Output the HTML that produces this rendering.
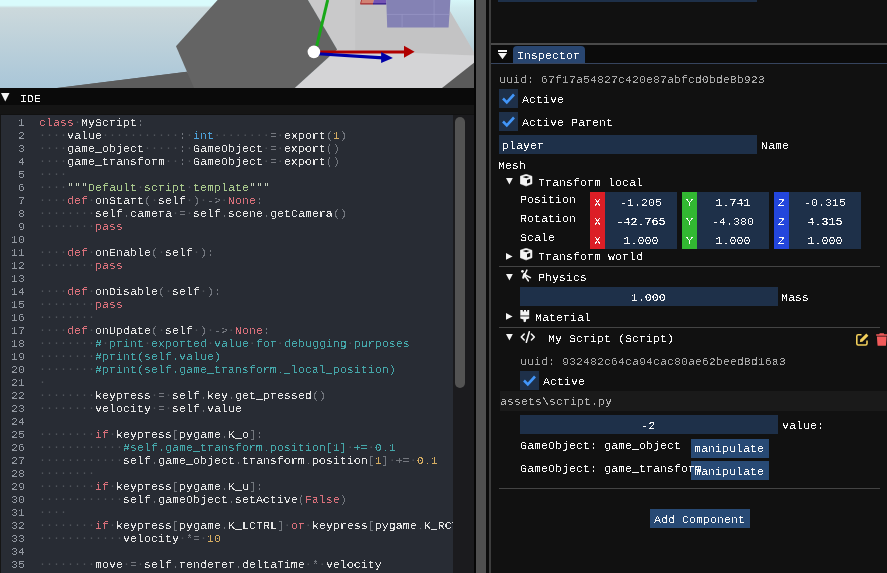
<!DOCTYPE html><html><head><meta charset="utf-8"><style>
*{margin:0;padding:0;box-sizing:border-box}
html,body{width:887px;height:573px;overflow:hidden;background:#111111}
body{position:relative;font-family:"Liberation Mono",monospace;font-size:11.67px;letter-spacing:0px;line-height:13px;color:#fafafa}
.a{position:absolute}
body>div,body>pre,body>svg{will-change:transform}
.t{white-space:pre}
.t,pre{filter:url(#crisp)}
pre.dots{filter:none;color:#50545b}
pre{font-family:"Liberation Mono",monospace;font-size:11.67px;letter-spacing:0px;line-height:13px;margin:0}
pre b{font-weight:normal}
pre i{font-style:normal;color:#50545c}
pre .k{color:#d9707b}
pre .w{color:#e6e6e6}
pre .p{color:#74787f}
pre .n{color:#d7ae63}
pre .s{color:#a9c98d}
pre .q{color:#c9d2bf}
pre .c{color:#45a8aa}
pre .t{color:#4ea4dc}
.fr{background:#1e3049}
.btn{background:#284a75}
.sep{background:#3c3c44;height:1px}
.gray{color:#a6a6a6}
</style></head><body><svg width="0" height="0" style="position:absolute;left:0;top:0"><filter id="crisp" x="-5%" y="-20%" width="110%" height="140%"><feComponentTransfer><feFuncA type="discrete" tableValues="0 1"/></feComponentTransfer></filter></svg>
<svg class="a" style="left:0;top:0" width="474" height="88" viewBox="0 0 474 88">
<defs>
<linearGradient id="sky" x1="0" y1="0" x2="0" y2="1">
<stop offset="0" stop-color="#d9fbfc"/>
<stop offset="0.06" stop-color="#d9fbfc"/>
<stop offset="0.09" stop-color="#ccd9dc"/>
<stop offset="1" stop-color="#a9c6d8"/>
</linearGradient>
</defs>
<rect x="0" y="0" width="474" height="88" fill="url(#sky)"/>
<polygon points="0,88 57,88 187,71.7 194,88" fill="#5a5a5a"/>
<polygon points="57,88 187,71.7 200,88" fill="#5c5c5c"/>
<polygon points="308,0 474,0 474,88 294.7,88 337.1,49.5" fill="#c9c9ca"/>
<polygon points="355.2,0 450,0 450,11 474,52 474,55.5 355.2,50.5" fill="#c3c3c4"/>
<linearGradient id="sky2" x1="0" y1="0" x2="0" y2="1"><stop offset="0" stop-color="#d6f6f8"/><stop offset="0.15" stop-color="#cfeaee"/><stop offset="1" stop-color="#b3cbd4"/></linearGradient>
<polygon points="450,0 474,0 474,52 450,11" fill="url(#sky2)"/>
<polygon points="337.1,50 474,55.5 474,88 294.7,88" fill="#d4d4d6"/>
<polygon points="442,88 474,62.8 474,88" fill="#5a5a5a"/>
<polygon points="217.6,0 308,0 337.1,49.5 294.7,88 194,88 176,46.2" fill="#646464"/>
<polygon points="361.5,0 374,0 373,3.3 360.6,3.3" fill="#d28274"/><polygon points="374,0 386.4,0 386.4,3.3 373,3.3" fill="#7454b4"/><rect x="360.3" y="3.2" width="12.8" height="1.3" fill="#a82828"/><rect x="373" y="3.2" width="13.4" height="1.3" fill="#2a0c88"/><line x1="361.6" y1="0" x2="360.6" y2="3.6" stroke="#b03030" stroke-width="0.9"/>

<polygon points="386.3,0 450.4,0 448.6,27.6 387.2,27.6" fill="#8482b4"/>
<line x1="402.1" y1="14.4" x2="402.1" y2="27.6" stroke="#9c9aca" stroke-width="0.6"/>
<line x1="434.1" y1="0" x2="434.1" y2="27.6" stroke="#9c9aca" stroke-width="0.6"/>
<line x1="387" y1="14.4" x2="449.5" y2="14.4" stroke="#9c9aca" stroke-width="0.6"/>
<line x1="327.7" y1="0" x2="316.7" y2="46" stroke="#18a818" stroke-width="3"/>
<line x1="314" y1="52" x2="405" y2="52" stroke="#b00000" stroke-width="3.2"/>
<polygon points="404,45.7 414.6,51.8 404,57.8" fill="#b00000"/>
<line x1="314" y1="53.5" x2="383" y2="57.8" stroke="#0000a8" stroke-width="3.2"/>
<polygon points="381.1,51.9 392.9,58.1 381.1,62.9" fill="#0000a8"/>
<circle cx="313.9" cy="51.9" r="6.3" fill="#ffffff"/>
</svg>

<div class="a" style="left:0px;top:88px;width:474px;height:17.2px;background:#0a0a0a;"></div>
<div class="a" style="left:0px;top:105.2px;width:474px;height:9.3px;background:#151515;"></div>
<svg class="a" style="left:0.5px;top:93px" width="8.5" height="8.5"><polygon points="0,0 8.5,0 4.25,8.5" fill="#f4f4f4"/></svg>
<div class="a t" style="left:19.5px;top:92.5px">IDE</div>
<div class="a" style="left:1px;top:114.5px;width:452.3px;height:460px;background:#282c34;"></div>
<div class="a" style="left:0px;top:114.5px;width:1px;height:460px;background:#151515;"></div>
<div class="a" style="left:453.3px;top:114.5px;width:20.5px;height:460px;background:#1b1b1e;"></div>
<div class="a" style="left:455px;top:117px;width:10px;height:270.5px;background:#535353;border-radius:5px"></div>
<pre class="a" style="left:11px;top:116.5px;width:14px;text-align:right;color:#959aa3">1
2
3
4
5
6
7
8
9
10
11
12
13
14
15
16
17
18
19
20
21
22
23
24
25
26
27
28
29
30
31
32
33
34
35</pre>
<div class="a" style="left:39px;top:114.5px;width:414.3px;height:460px;overflow:hidden"><pre class="dots" style="position:absolute;left:0;top:1.0px">     ·
····     ··········· ·   ········ ·
····           ····· ·          · ·
····              ·· ·          · ·
····
····          ·      ·
····   ·        ·    · ·  ·
········           · ·
········

····   ·         ·    ·
········

····   ·          ·    ·
········
········
····   ·         ·    · ·  ·
········ ·     ·        ·     ·   ·         ·
········
········
·
········        · ·
········        · ·

········  ·
············                                ·  ·
············                                      ·  ·
········
········  ·
············
····
········  ·                        ·  ·
············        ·  ·

········    · ·                       · ·</pre><pre style="position:absolute;left:0;top:2.0px"><b class="k">class</b> <b class="w">MyScript</b><b class="p">:</b>
    <b class="w">value</b>           <b class="p">:</b> <b class="t">int</b>        <b class="p">=</b> <b class="w">export</b><b class="p">(</b><b class="n">1</b><b class="p">)</b>
    <b class="w">game_object</b>     <b class="p">:</b> <b class="w">GameObject</b> <b class="p">=</b> <b class="w">export</b><b class="p">(</b><b class="p">)</b>
    <b class="w">game_transform</b>  <b class="p">:</b> <b class="w">GameObject</b> <b class="p">=</b> <b class="w">export</b><b class="p">(</b><b class="p">)</b>
    
    <b class="q">"""</b><b class="s">Default</b> <b class="s">script</b> <b class="s">template</b><b class="q">"""</b>
    <b class="k">def</b> <b class="w">onStart</b><b class="p">(</b> <b class="w">self</b> <b class="p">)</b> <b class="p">-</b><b class="p">&gt;</b> <b class="k">None</b><b class="p">:</b>
        <b class="w">self</b><b class="p">.</b><b class="w">camera</b> <b class="p">=</b> <b class="w">self</b><b class="p">.</b><b class="w">scene</b><b class="p">.</b><b class="w">getCamera</b><b class="p">(</b><b class="p">)</b>
        <b class="k">pass</b>

    <b class="k">def</b> <b class="w">onEnable</b><b class="p">(</b> <b class="w">self</b> <b class="p">)</b><b class="p">:</b>
        <b class="k">pass</b>

    <b class="k">def</b> <b class="w">onDisable</b><b class="p">(</b> <b class="w">self</b> <b class="p">)</b><b class="p">:</b>
        <b class="k">pass</b>
        
    <b class="k">def</b> <b class="w">onUpdate</b><b class="p">(</b> <b class="w">self</b> <b class="p">)</b> <b class="p">-</b><b class="p">&gt;</b> <b class="k">None</b><b class="p">:</b>
        <b class="c">#</b> <b class="c">print</b> <b class="c">exported</b> <b class="c">value</b> <b class="c">for</b> <b class="c">debugging</b> <b class="c">purposes</b>
        <b class="c">#print(self.value)</b>
        <b class="c">#print(self.game_transform._local_position)</b>
 
        <b class="w">keypress</b> <b class="p">=</b> <b class="w">self</b><b class="p">.</b><b class="w">key</b><b class="p">.</b><b class="w">get_pressed</b><b class="p">(</b><b class="p">)</b>
        <b class="w">velocity</b> <b class="p">=</b> <b class="w">self</b><b class="p">.</b><b class="w">value</b>

        <b class="k">if</b> <b class="w">keypress</b><b class="p">[</b><b class="w">pygame</b><b class="p">.</b><b class="w">K_o</b><b class="p">]</b><b class="p">:</b>
            <b class="c">#self.game_transform.position[1]</b> <b class="c">+=</b> <b class="c">0.1</b>
            <b class="w">self</b><b class="p">.</b><b class="w">game_object</b><b class="p">.</b><b class="w">transform</b><b class="p">.</b><b class="w">position</b><b class="p">[</b><b class="n">1</b><b class="p">]</b> <b class="p">+</b><b class="p">=</b> <b class="n">0.1</b>
        
        <b class="k">if</b> <b class="w">keypress</b><b class="p">[</b><b class="w">pygame</b><b class="p">.</b><b class="w">K_u</b><b class="p">]</b><b class="p">:</b>
            <b class="w">self</b><b class="p">.</b><b class="w">gameObject</b><b class="p">.</b><b class="w">setActive</b><b class="p">(</b><b class="k">False</b><b class="p">)</b>
    
        <b class="k">if</b> <b class="w">keypress</b><b class="p">[</b><b class="w">pygame</b><b class="p">.</b><b class="w">K_LCTRL</b><b class="p">]</b> <b class="k">or</b> <b class="w">keypress</b><b class="p">[</b><b class="w">pygame</b><b class="p">.</b><b class="w">K_RCTRL</b><b class="p">]</b><b class="p">:</b>
            <b class="w">velocity</b> <b class="p">*</b><b class="p">=</b> <b class="n">10</b>

        <b class="w">move</b> <b class="p">=</b> <b class="w">self</b><b class="p">.</b><b class="w">renderer</b><b class="p">.</b><b class="w">deltaTime</b> <b class="p">*</b> <b class="w">velocity</b></pre></div>
<div class="a" style="left:474px;top:0px;width:1.8px;height:573px;background:#060606;"></div>
<div class="a" style="left:475.8px;top:0px;width:10.2px;height:573px;background:#4f4f4f;"></div>
<div class="a" style="left:486px;top:0px;width:3.2px;height:573px;background:#0b0b0b;"></div>
<div class="a" style="left:489.2px;top:0px;width:2px;height:573px;background:#3d3d3d;"></div>
<div class="a" style="left:498px;top:0px;width:259px;height:2px;background:#1e3049;"></div>
<div class="a" style="left:491.2px;top:43px;width:396px;height:1.8px;background:#4a4a4a;"></div>
<div class="a" style="left:491.2px;top:44.8px;width:396px;height:18.2px;background:#0b0b0b;"></div>
<div class="a" style="left:491.2px;top:63px;width:396px;height:1px;background:#36445e;"></div>
<div class="a" style="left:498px;top:50px;width:9px;height:2px;background:#f4f4f4;"></div>
<svg class="a" style="left:498px;top:53px" width="9" height="6.2"><polygon points="0,0 9,0 4.5,6.2" fill="#f4f4f4"/></svg>
<div class="a" style="left:513px;top:46.3px;width:72px;height:16.7px;background:#294670;border-radius:4px 4px 0 0"></div>
<div class="a t" style="left:516.5px;top:49.5px">Inspector</div>
<div class="a t" style="left:498.6px;top:73.5px;color:#a8a8a8">uuid: 67f17a54827c420e87abfcd0bde8b923</div>
<div class="a" style="left:498.6px;top:89px;width:19px;height:19px;background:#1e3049;"></div><svg class="a" style="left:498.6px;top:89px" width="19" height="19"><polyline points="4,9.5 7.8,13.3 15,5.5" fill="none" stroke="#4296f9" stroke-width="2.6"/></svg>
<div class="a t" style="left:522.0px;top:93.5px">Active</div>
<div class="a" style="left:498.6px;top:112px;width:19px;height:19px;background:#1e3049;"></div><svg class="a" style="left:498.6px;top:112px" width="19" height="19"><polyline points="4,9.5 7.8,13.3 15,5.5" fill="none" stroke="#4296f9" stroke-width="2.6"/></svg>
<div class="a t" style="left:522.0px;top:116.5px">Active Parent</div>
<div class="a" style="left:498.6px;top:135px;width:258.4px;height:19px;background:#1e3049;"></div>
<div class="a t" style="left:502.0px;top:139.5px">player</div>
<div class="a t" style="left:760.6px;top:139.5px">Name</div>
<div class="a t" style="left:497.6px;top:159.5px">Mesh</div>
<svg class="a" style="left:506.3px;top:178.1px" width="6.8" height="6.6"><polygon points="0,0 6.8,0 3.4,6.6" fill="#f4f4f4"/></svg>
<svg class="a" style="left:519.5px;top:174px" width="13" height="13" viewBox="0 0 13 13"><path d="M6.1 0.2 L12 2.3 L12 9.7 L6.1 12.1 L0.2 9.7 L0.2 2.3 Z" fill="#f4f4f4" stroke="#f4f4f4" stroke-width="0.5" stroke-linejoin="round"/><path d="M2.7 3.0 L6.2 1.9 L9.7 3.0 L6.2 4.2 Z" fill="#111111"/><path d="M7.0 5.9 L10.2 4.8 L10.2 8.6 L7.0 9.6 Z" fill="#111111"/></svg>
<div class="a t" style="left:538.4px;top:176.5px">Transform local</div>
<div class="a t" style="left:519.7px;top:193.5px">Position</div>
<div class="a t" style="left:519.7px;top:212.5px">Rotation</div>
<div class="a t" style="left:519.7px;top:231.5px">Scale</div>
<div class="a" style="left:590px;top:192px;width:15.3px;height:57px;background:#dc1e26;"></div>
<div class="a" style="left:682px;top:192px;width:15.1px;height:57px;background:#32b832;"></div>
<div class="a" style="left:774px;top:192px;width:14.8px;height:57px;background:#2346dc;"></div>
<div class="a" style="left:605.2px;top:192px;width:71.8px;height:57px;background:#1e3049;"></div>
<div class="a t" style="left:589.5px;top:196.5px;width:15px;text-align:center">X</div>
<div class="a t" style="left:589.5px;top:215.5px;width:15px;text-align:center">X</div>
<div class="a t" style="left:589.5px;top:234.5px;width:15px;text-align:center">X</div>
<div class="a" style="left:697.2px;top:192px;width:71.8px;height:57px;background:#1e3049;"></div>
<div class="a t" style="left:681.5px;top:196.5px;width:15px;text-align:center">Y</div>
<div class="a t" style="left:681.5px;top:215.5px;width:15px;text-align:center">Y</div>
<div class="a t" style="left:681.5px;top:234.5px;width:15px;text-align:center">Y</div>
<div class="a" style="left:789.2px;top:192px;width:71.8px;height:57px;background:#1e3049;"></div>
<div class="a t" style="left:773.5px;top:196.5px;width:15px;text-align:center">Z</div>
<div class="a t" style="left:773.5px;top:215.5px;width:15px;text-align:center">Z</div>
<div class="a t" style="left:773.5px;top:234.5px;width:15px;text-align:center">Z</div>
<div class="a t" style="left:604.7px;top:196.5px;width:72px;text-align:center">-1.205</div>
<div class="a t" style="left:696.7px;top:196.5px;width:72px;text-align:center">1.741</div>
<div class="a t" style="left:788.7px;top:196.5px;width:72px;text-align:center">-0.315</div>
<div class="a t" style="left:604.7px;top:215.5px;width:72px;text-align:center">-42.765</div>
<div class="a t" style="left:696.7px;top:215.5px;width:72px;text-align:center">-4.380</div>
<div class="a t" style="left:788.7px;top:215.5px;width:72px;text-align:center">4.315</div>
<div class="a t" style="left:604.7px;top:234.5px;width:72px;text-align:center">1.000</div>
<div class="a t" style="left:696.7px;top:234.5px;width:72px;text-align:center">1.000</div>
<div class="a t" style="left:788.7px;top:234.5px;width:72px;text-align:center">1.000</div>
<svg class="a" style="left:506.3px;top:252.5px" width="6.6" height="6.8"><polygon points="0,0 6.6,3.4 0,6.8" fill="#f4f4f4"/></svg>
<svg class="a" style="left:519.5px;top:248px" width="13" height="13" viewBox="0 0 13 13"><path d="M6.1 0.2 L12 2.3 L12 9.7 L6.1 12.1 L0.2 9.7 L0.2 2.3 Z" fill="#f4f4f4" stroke="#f4f4f4" stroke-width="0.5" stroke-linejoin="round"/><path d="M2.7 3.0 L6.2 1.9 L9.7 3.0 L6.2 4.2 Z" fill="#111111"/><path d="M7.0 5.9 L10.2 4.8 L10.2 8.6 L7.0 9.6 Z" fill="#111111"/></svg>
<div class="a t" style="left:538.4px;top:250.5px">Transform world</div>
<div class="a" style="left:498.6px;top:265.5px;width:381.4px;height:1px;background:#444444;"></div>
<svg class="a" style="left:506.3px;top:273.5px" width="6.8" height="6.6"><polygon points="0,0 6.8,0 3.4,6.6" fill="#f4f4f4"/></svg>
<svg class="a" style="left:520px;top:269px" width="13" height="14" viewBox="0 0 13 14"><g fill="none" stroke="#f4f4f4" stroke-linecap="round" stroke-linejoin="round"><path d="M6.9 1.1 L5.1 4.9" stroke-width="1.5"/><path d="M4.4 5.2 L3.3 8.6" stroke-width="2.3"/><path d="M4.8 5.8 L10.4 8.6" stroke-width="1.6"/><path d="M4.8 6.6 L8.3 11.8" stroke-width="1.6"/></g><circle cx="2.45" cy="2.3" r="1.35" fill="#f4f4f4"/></svg>
<div class="a t" style="left:538.4px;top:271.5px">Physics</div>
<div class="a" style="left:519.7px;top:287px;width:258.3px;height:19px;background:#1e3049;"></div>
<div class="a t" style="left:519.2px;top:291.5px;width:258.3px;text-align:center">1.000</div>
<div class="a t" style="left:780.9px;top:291.5px">Mass</div>
<svg class="a" style="left:506.3px;top:313.2px" width="6.6" height="6.8"><polygon points="0,0 6.6,3.4 0,6.8" fill="#f4f4f4"/></svg>
<svg class="a" style="left:519.8px;top:309.6px" width="10" height="13" viewBox="0 0 10 13"><path d="M0.3 0 L2.8 0 L2.8 1.4 L4 1.4 L4 0 L6 0 L6 1.4 L7.2 1.4 L7.2 0 L9.2 0 L9.2 5.6 L0.3 5.6 Z" fill="#f4f4f4"/><rect x="0.3" y="5.6" width="8.9" height="1.2" fill="#9a9a9a"/><path d="M0.3 6.8 L9.2 6.8 L9.2 8.6 L6 9.4 L6 11.6 L4.75 12.3 L3.5 11.6 L3.5 9.4 L0.3 8.6 Z" fill="#f4f4f4"/></svg>
<div class="a t" style="left:534.6px;top:311.5px">Material</div>
<div class="a" style="left:498.6px;top:327px;width:381.4px;height:1px;background:#444444;"></div>
<svg class="a" style="left:506.3px;top:334.3px" width="6.8" height="6.6"><polygon points="0,0 6.8,0 3.4,6.6" fill="#f4f4f4"/></svg>
<svg class="a" style="left:519.8px;top:330.8px" width="16" height="12" viewBox="0 0 16 12"><polyline points="4.2,3 1.3,6 4.2,9" fill="none" stroke="#f4f4f4" stroke-width="1.6" stroke-linecap="round" stroke-linejoin="round"/><polyline points="11.4,3 14.3,6 11.4,9" fill="none" stroke="#f4f4f4" stroke-width="1.6" stroke-linecap="round" stroke-linejoin="round"/><line x1="9.3" y1="0.8" x2="6.3" y2="11.2" stroke="#f4f4f4" stroke-width="1.6" stroke-linecap="round"/></svg>
<div class="a t" style="left:547.5px;top:332.5px">My Script (Script)</div>
<svg class="a" style="left:855.5px;top:333px" width="13" height="13" viewBox="0 0 13 13"><path d="M5.5 1.8 L2.2 1.8 Q0.8 1.8 0.8 3.2 L0.8 10.6 Q0.8 12 2.2 12 L9.6 12 Q11 12 11 10.6 L11 7.5" fill="none" stroke="#f2cf5b" stroke-width="1.6"/><path d="M10.3 0.6 L12.4 2.7 L6.4 8.7 L3.9 9.1 L4.3 6.6 Z" fill="#f2cf5b"/></svg>
<svg class="a" style="left:875.5px;top:333px" width="12" height="13" viewBox="0 0 12 13"><path d="M3.8 0.2 L7.7 0.2 L8.3 1.2 L11.3 1.2 L11.3 2.8 L0.2 2.8 L0.2 1.2 L3.2 1.2 Z" fill="#f25a5a"/><path d="M0.9 3.6 L10.6 3.6 L10 12.2 Q9.9 12.8 9.2 12.8 L2.3 12.8 Q1.6 12.8 1.5 12.2 Z" fill="#f25a5a"/></svg>
<div class="a t" style="left:519.7px;top:355.5px;color:#a8a8a8">uuid: 932482c64ca94cac80ae62beed8d16a3</div>
<div class="a" style="left:519.7px;top:371px;width:19px;height:19px;background:#1e3049;"></div><svg class="a" style="left:519.7px;top:371px" width="19" height="19"><polyline points="4,9.5 7.8,13.3 15,5.5" fill="none" stroke="#4296f9" stroke-width="2.6"/></svg>
<div class="a t" style="left:542.7px;top:375.5px">Active</div>
<div class="a" style="left:499.6px;top:391px;width:387.4px;height:19.5px;background:#1a1a1a;"></div>
<div class="a t" style="left:499.5px;top:395.5px;color:#b4b4b4">assets\script.py</div>
<div class="a" style="left:519.7px;top:415px;width:258.3px;height:19px;background:#1e3049;"></div>
<div class="a t" style="left:519.2px;top:419.5px;width:258.3px;text-align:center">-2</div>
<div class="a t" style="left:781.7px;top:419.5px">value:</div>
<div class="a t" style="left:519.8px;top:439.5px">GameObject: game_object</div>
<div class="a" style="left:691px;top:438.5px;width:78px;height:18.5px;background:#284a75;"></div>
<div class="a t" style="left:694.0px;top:443.0px">manipulate</div>
<div class="a" style="left:691px;top:461.2px;width:78px;height:18.5px;background:#284a75;"></div>
<div class="a t" style="left:694.0px;top:465.7px">manipulate</div>
<div class="a t" style="left:519.8px;top:462.5px">GameObject: game_transform</div>
<div class="a" style="left:498.6px;top:487.8px;width:381.4px;height:1px;background:#444444;"></div>
<div class="a" style="left:650px;top:509px;width:100px;height:19px;background:#284a75;"></div>
<div class="a t" style="left:653.9px;top:513.5px">Add Component</div></body></html>
